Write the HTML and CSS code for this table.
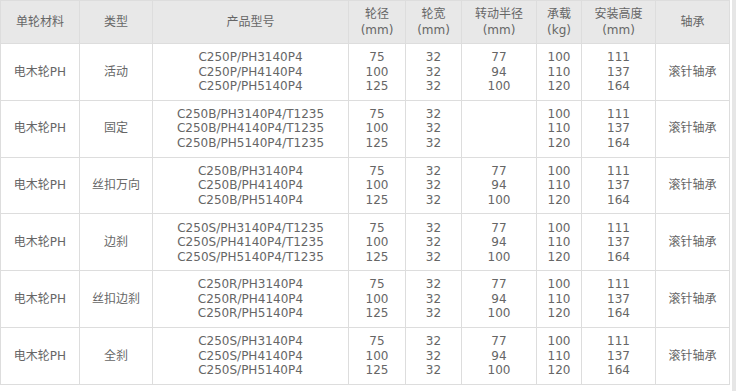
FILE: index.html
```html
<!DOCTYPE html>
<html lang="zh">
<head>
<meta charset="utf-8">
<title>电木轮PH</title>
<link rel="stylesheet" href="styles.css">
</head>
<body>
<div class="wrap">
<table class="spec">
<colgroup>
<col class="c1"><col class="c2"><col class="c3"><col class="c4"><col class="c5"><col class="c6"><col class="c7"><col class="c8"><col class="c9">
</colgroup>
<thead>
<tr>
<th>单轮材料</th><th>类型</th><th>产品型号</th><th>轮径<br>(mm)</th><th>轮宽<br>(mm)</th><th>转动半径<br>(mm)</th><th>承载<br>(kg)</th><th>安装高度<br>(mm)</th><th>轴承</th>
</tr>
</thead>
<tbody>
<tr>
<td>电木轮PH</td><td>活动</td><td>C250P/PH3140P4<br>C250P/PH4140P4<br>C250P/PH5140P4</td><td>75<br>100<br>125</td><td>32<br>32<br>32</td><td>77<br>94<br>100</td><td>100<br>110<br>120</td><td>111<br>137<br>164</td><td>滚针轴承</td>
</tr>
<tr>
<td>电木轮PH</td><td>固定</td><td>C250B/PH3140P4/T1235<br>C250B/PH4140P4/T1235<br>C250B/PH5140P4/T1235</td><td>75<br>100<br>125</td><td>32<br>32<br>32</td><td></td><td>100<br>110<br>120</td><td>111<br>137<br>164</td><td>滚针轴承</td>
</tr>
<tr>
<td>电木轮PH</td><td>丝扣万向</td><td>C250B/PH3140P4<br>C250B/PH4140P4<br>C250B/PH5140P4</td><td>75<br>100<br>125</td><td>32<br>32<br>32</td><td>77<br>94<br>100</td><td>100<br>110<br>120</td><td>111<br>137<br>164</td><td>滚针轴承</td>
</tr>
<tr>
<td>电木轮PH</td><td>边刹</td><td>C250S/PH3140P4/T1235<br>C250S/PH4140P4/T1235<br>C250S/PH5140P4/T1235</td><td>75<br>100<br>125</td><td>32<br>32<br>32</td><td>77<br>94<br>100</td><td>100<br>110<br>120</td><td>111<br>137<br>164</td><td>滚针轴承</td>
</tr>
<tr>
<td>电木轮PH</td><td>丝扣边刹</td><td>C250R/PH3140P4<br>C250R/PH4140P4<br>C250R/PH5140P4</td><td>75<br>100<br>125</td><td>32<br>32<br>32</td><td>77<br>94<br>100</td><td>100<br>110<br>120</td><td>111<br>137<br>164</td><td>滚针轴承</td>
</tr>
<tr>
<td>电木轮PH</td><td>全刹</td><td>C250S/PH3140P4<br>C250S/PH4140P4<br>C250S/PH5140P4</td><td>75<br>100<br>125</td><td>32<br>32<br>32</td><td>77<br>94<br>100</td><td>100<br>110<br>120</td><td>111<br>137<br>164</td><td>滚针轴承</td>
</tr>
</tbody>
</table>
</div>
</body>
</html>
```

FILE: styles.css
```css
html, body {
  margin: 0;
  padding: 0;
  background: #fff;
}
.wrap {
  width: 732px;
  min-height: 391px;
  border-right: 4px solid #e6e6e6;
}
.spec {
  border-collapse: collapse;
  table-layout: fixed;
  width: 729px;
  font-family: "DejaVu Sans", "Noto Sans CJK SC", sans-serif;
  font-size: 12px;
  line-height: 14.5px;
  color: #666;
}
.spec th, .spec td {
  border: 1px solid #ddd;
  text-align: center;
  vertical-align: middle;
  padding: 0;
  font-weight: normal;
}
.spec th {
  background: #e8e8e8;
  height: 42px;
  line-height: 16px;
}
.spec td {
  height: 55.8px;
}
.c1 { width: 79px; }
.c2 { width: 73px; }
.c3 { width: 196px; }
.c4 { width: 57px; }
.c5 { width: 56px; }
.c6 { width: 75px; }
.c7 { width: 45px; }
.c8 { width: 74px; }
.c9 { width: 74px; }
```
